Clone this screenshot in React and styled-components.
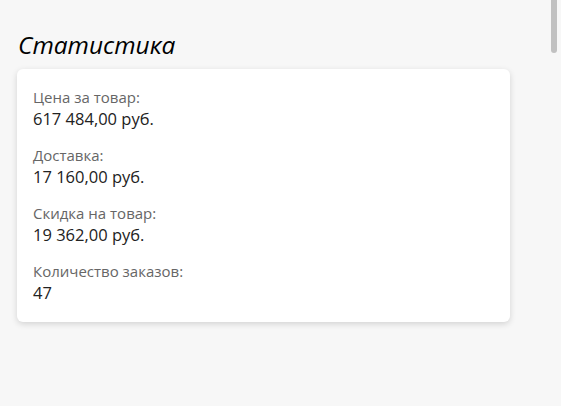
import styled, { createGlobalStyle } from 'styled-components';

const GlobalStyle = createGlobalStyle`
  html, body {
    margin: 0;
    padding: 0;
    background: #f7f7f7;
    font-family: "Open Sans", "Noto Sans", sans-serif;
    overflow: hidden;
  }
`;

const stats = [
  { label: 'Цена за товар:', value: '617 484,00 руб.' },
  { label: 'Доставка:', value: '17 160,00 руб.' },
  { label: 'Скидка на товар:', value: '19 362,00 руб.' },
  { label: 'Количество заказов:', value: '47' },
];

const App = () => {
  return (
    <>
      <GlobalStyle />
      <Page>
        <Title>Статистика</Title>
        <Card>
          {stats.map((s) => (
            <Item key={s.label}>
              <Label>{s.label}</Label>
              <Value>{s.value}</Value>
            </Item>
          ))}
        </Card>
      </Page>
      <ScrollThumb />
    </>
  );
};

export default App;

const Page = styled.div`
  width: 510px;
  padding: 28px 0 0 17px;
  min-height: 406px;
  box-sizing: border-box;
`;

const Title = styled.h2`
  margin: 0 0 8px 1px;
  font-size: 24.5px;
  font-style: italic;
  font-weight: 400;
  color: #000;
  line-height: 33px;
`;

const Card = styled.div`
  background: #fff;
  border-radius: 6px;
  box-shadow: 0 2px 6px rgba(0, 0, 0, 0.15);
  padding: 18px 16px 18px;
  display: flex;
  flex-direction: column;
  gap: 15px;
`;

const Item = styled.div`
  display: flex;
  flex-direction: column;
`;

const Label = styled.span`
  font-size: 15px;
  line-height: 21px;
  color: #666;
`;

const Value = styled.span`
  font-size: 16.5px;
  line-height: 22px;
  color: #222;
`;

const ScrollThumb = styled.div`
  position: fixed;
  top: -4px;
  right: 4px;
  width: 6px;
  height: 57px;
  border-radius: 3px;
  background: #c1c1c1;
`;
